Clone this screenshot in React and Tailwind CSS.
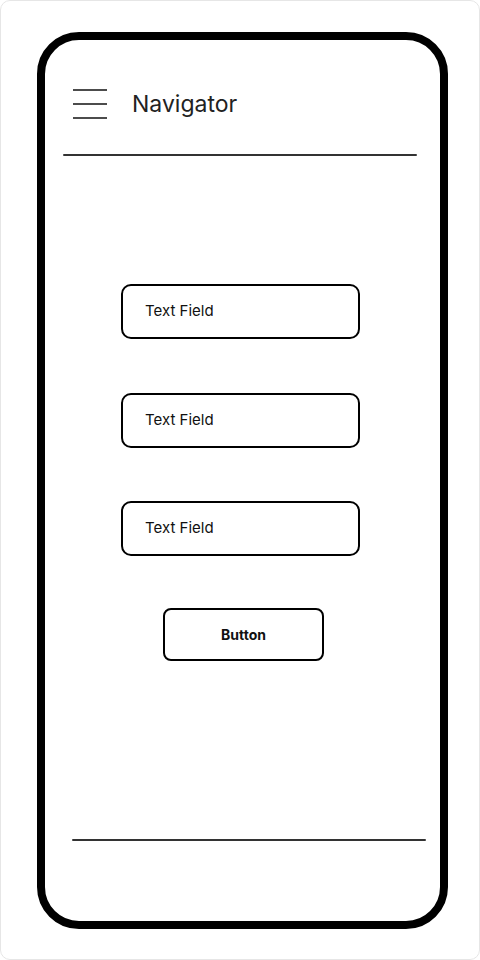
export default function App() {
  const field = (
    <div className="w-[239px] h-[55px] border-2 border-black rounded-[10px] flex items-center pl-[22px] text-[15px] text-[#111] font-['Inter',sans-serif]">
      Text Field
    </div>
  );
  return (
    <div className="w-[480px] h-[960px] bg-white border border-[#e6e6e6] rounded-[10px] font-['Inter',sans-serif]">
      <div className="ml-[36px] mt-[31px] w-[411px] h-[897px] border-[8px] border-black rounded-[42px] flex flex-col">
        <div className="mt-[44px] ml-[28px] flex items-center h-[40px]">
          <svg width="34" height="32" viewBox="0 0 34 32" className="shrink-0">
            <line x1="0" y1="2" x2="34" y2="2" stroke="#111" strokeWidth="1.6" />
            <line x1="0" y1="16" x2="34" y2="16" stroke="#111" strokeWidth="1.6" />
            <line x1="0" y1="30" x2="34" y2="30" stroke="#111" strokeWidth="1.6" />
          </svg>
          <span className="ml-[25px] text-[23px] text-[#222] leading-none">Navigator</span>
        </div>
        <div className="mt-[30px] ml-[18px] w-[354px] h-[2px] rounded-full bg-[#333]" />
        <div className="mt-[128px] ml-[76px] flex flex-col gap-[53.5px]">
          {field}
          {field}
          {field}
        </div>
        <div className="mt-[52px] ml-[118px] w-[161px] h-[53px] border-2 border-black rounded-[8px] flex items-center justify-center text-[14px] font-bold text-[#111]">
          Button
        </div>
        <div className="mt-[178px] ml-[27px] w-[354px] h-[2px] rounded-full bg-[#333]" />
      </div>
    </div>
  );
}
